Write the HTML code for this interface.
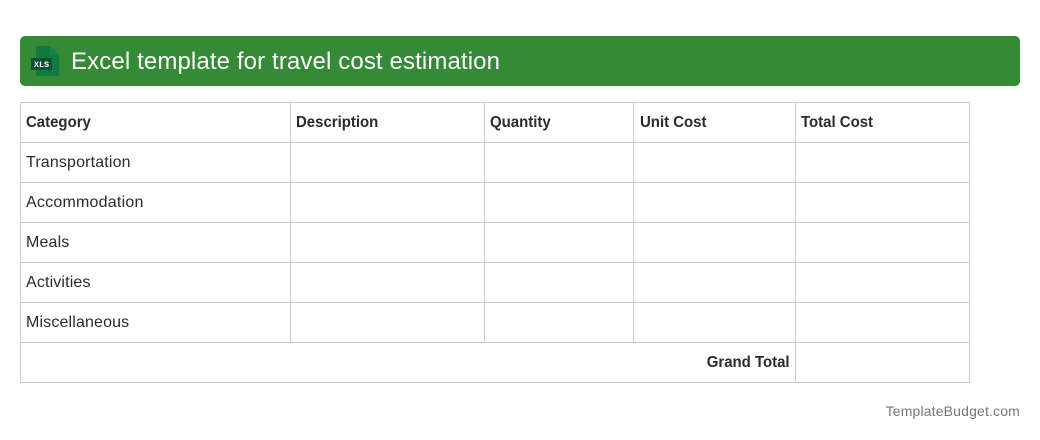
<!DOCTYPE html>
<html>
<head>
<meta charset="utf-8">
<style>
html,body{margin:0;padding:0;background:#fff}
body{width:1040px;height:440px;position:relative;overflow:hidden;font-family:"Liberation Sans",sans-serif;color:#2b2b2b}
.bar{position:absolute;left:20px;top:36px;width:1000px;height:50px;background:#348a35;border-radius:5px}
.title{position:absolute;left:71px;top:47px;font-size:24px;line-height:30px;letter-spacing:.12px;color:#fff;white-space:nowrap}
.icon{position:absolute;left:31px;top:46px}
.h{position:absolute;background:#ccc;left:20px;width:950px;height:1px}
.v{position:absolute;background:#ccc;width:1px}
.t{position:absolute;font-size:16px;line-height:20px;letter-spacing:.15px;white-space:nowrap;margin-top:1px}
.b{font-weight:bold;letter-spacing:0;transform:scaleX(.935);transform-origin:left center}
.foot{position:absolute;right:20px;top:401px;font-size:14px;line-height:20px;letter-spacing:.16px;color:#777;white-space:nowrap}
</style>
</head>
<body>
<div class="bar"></div>
<svg class="icon" width="30" height="30" viewBox="0 0 30 30">
<path d="M5 2 Q5 0 7 0 H19 L28 9 V28 Q28 30 26 30 H7 Q5 30 5 28 Z" fill="#0f7a40"/>
<path d="M19 0 L28 9 H21 Q19 9 19 7 Z" fill="#15824a"/>
<rect x="0" y="12" width="21" height="12" fill="#0c5230"/>
<text x="10.5" y="21" font-family="Liberation Mono, monospace" font-size="8.5" font-weight="bold" fill="#fff" text-anchor="middle">XLS</text>
</svg>
<div class="title">Excel template for travel cost estimation</div>

<div class="h" style="top:102px"></div>
<div class="h" style="top:142px"></div>
<div class="h" style="top:182px"></div>
<div class="h" style="top:222px"></div>
<div class="h" style="top:262px"></div>
<div class="h" style="top:302px"></div>
<div class="h" style="top:342px"></div>
<div class="h" style="top:382px"></div>
<div class="v" style="left:20px;top:102px;height:281px"></div>
<div class="v" style="left:969px;top:102px;height:281px"></div>
<div class="v" style="left:795px;top:102px;height:281px"></div>
<div class="v" style="left:290px;top:102px;height:241px"></div>
<div class="v" style="left:484px;top:102px;height:241px"></div>
<div class="v" style="left:633px;top:102px;height:241px"></div>

<div class="t b" style="left:26px;top:112px">Category</div>
<div class="t b" style="left:296px;top:112px">Description</div>
<div class="t b" style="left:490px;top:112px">Quantity</div>
<div class="t b" style="left:640px;top:112px">Unit Cost</div>
<div class="t b" style="left:801px;top:112px">Total Cost</div>
<div class="t" style="left:26px;top:152px">Transportation</div>
<div class="t" style="left:26px;top:192px;letter-spacing:.22px">Accommodation</div>
<div class="t" style="left:26px;top:232px">Meals</div>
<div class="t" style="left:26px;top:272px">Activities</div>
<div class="t" style="left:26px;top:312px">Miscellaneous</div>
<div class="t b" style="right:250px;top:352px;transform-origin:right center">Grand Total</div>
<div class="foot">TemplateBudget.com</div>
</body>
</html>
